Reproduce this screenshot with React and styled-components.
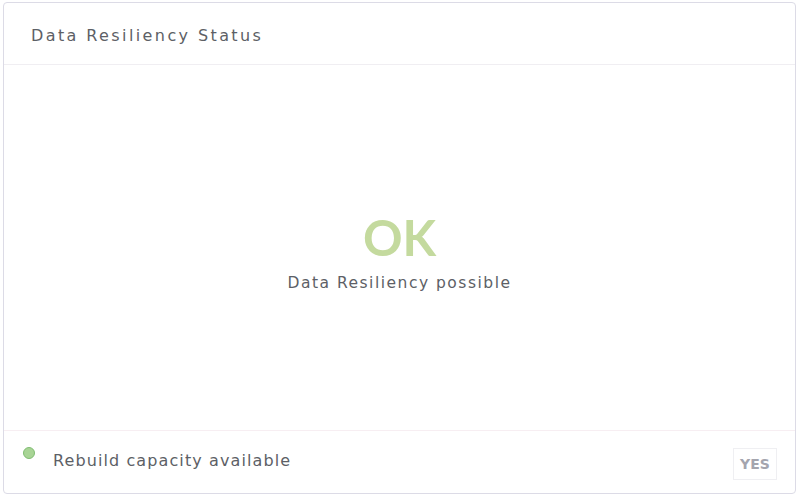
import React from 'react'
import styled, { createGlobalStyle } from 'styled-components'

const GlobalStyle = createGlobalStyle`
  html, body {
    margin: 0;
    padding: 0;
    background: #ffffff;
  }
  body {
    font-family: 'DejaVu Sans', 'Open Sans', sans-serif;
  }
`

const Page = styled.div`
  width: 800px;
  height: 497px;
  box-sizing: border-box;
  padding: 2px 4px 3px 3px;
`

const Card = styled.section`
  height: 100%;
  box-sizing: border-box;
  border: 1px solid #dcdbe6;
  border-radius: 4px;
  display: flex;
  flex-direction: column;
  background: #fff;
`

const Header = styled.header`
  height: 62px;
  box-sizing: border-box;
  border-bottom: 1px solid #f0eef2;
  display: flex;
  align-items: center;
  padding: 4px 27px 0;
`

const Title = styled.h2`
  margin: 0;
  font-size: 16px;
  font-weight: 400;
  letter-spacing: 2.4px;
  color: #5d5f66;
`

const Body = styled.div`
  flex: 1;
  display: flex;
  flex-direction: column;
  align-items: center;
  justify-content: center;
  padding-top: 8px;
`

const Status = styled.div`
  font-family: 'Lato', 'Open Sans', sans-serif;
  font-size: 49px;
  font-weight: 700;
  line-height: 50px;
  color: ${p => p.color};
`

const Caption = styled.div`
  margin-top: 12px;
  font-size: 15.5px;
  letter-spacing: 1.5px;
  color: #5d5f66;
`

const Footer = styled.footer`
  height: 63px;
  box-sizing: border-box;
  border-top: 1px solid #f7eef2;
  display: flex;
  align-items: center;
  padding: 0 18px 0 19px;
`

const Dot = styled.span`
  width: 10px;
  height: 10px;
  border-radius: 50%;
  background: ${p => p.color};
  border: 1px solid #80bd72;
  align-self: flex-start;
  margin-top: 16px;
  flex-shrink: 0;
`

const Label = styled.span`
  flex: 1;
  margin-left: 18px;
  margin-top: -4px;
  font-size: 16px;
  letter-spacing: 1.1px;
  color: #5d5f66;
`

const Badge = styled.span`
  width: 44px;
  height: 32px;
  box-sizing: border-box;
  border: 1px solid #efeff2;
  display: flex;
  align-items: center;
  justify-content: center;
  margin-top: 4px;
  font-size: 14px;
  font-weight: 700;
  color: #a4a5ae;
`

export default function App() {
  return (
    <>
      <GlobalStyle />
      <Page>
        <Card>
          <Header>
            <Title>Data Resiliency Status</Title>
          </Header>
          <Body>
            <Status color="#c4da9e">OK</Status>
            <Caption>Data Resiliency possible</Caption>
          </Body>
          <Footer>
            <Dot color="#a8d495" />
            <Label>Rebuild capacity available</Label>
            <Badge>YES</Badge>
          </Footer>
        </Card>
      </Page>
    </>
  )
}
